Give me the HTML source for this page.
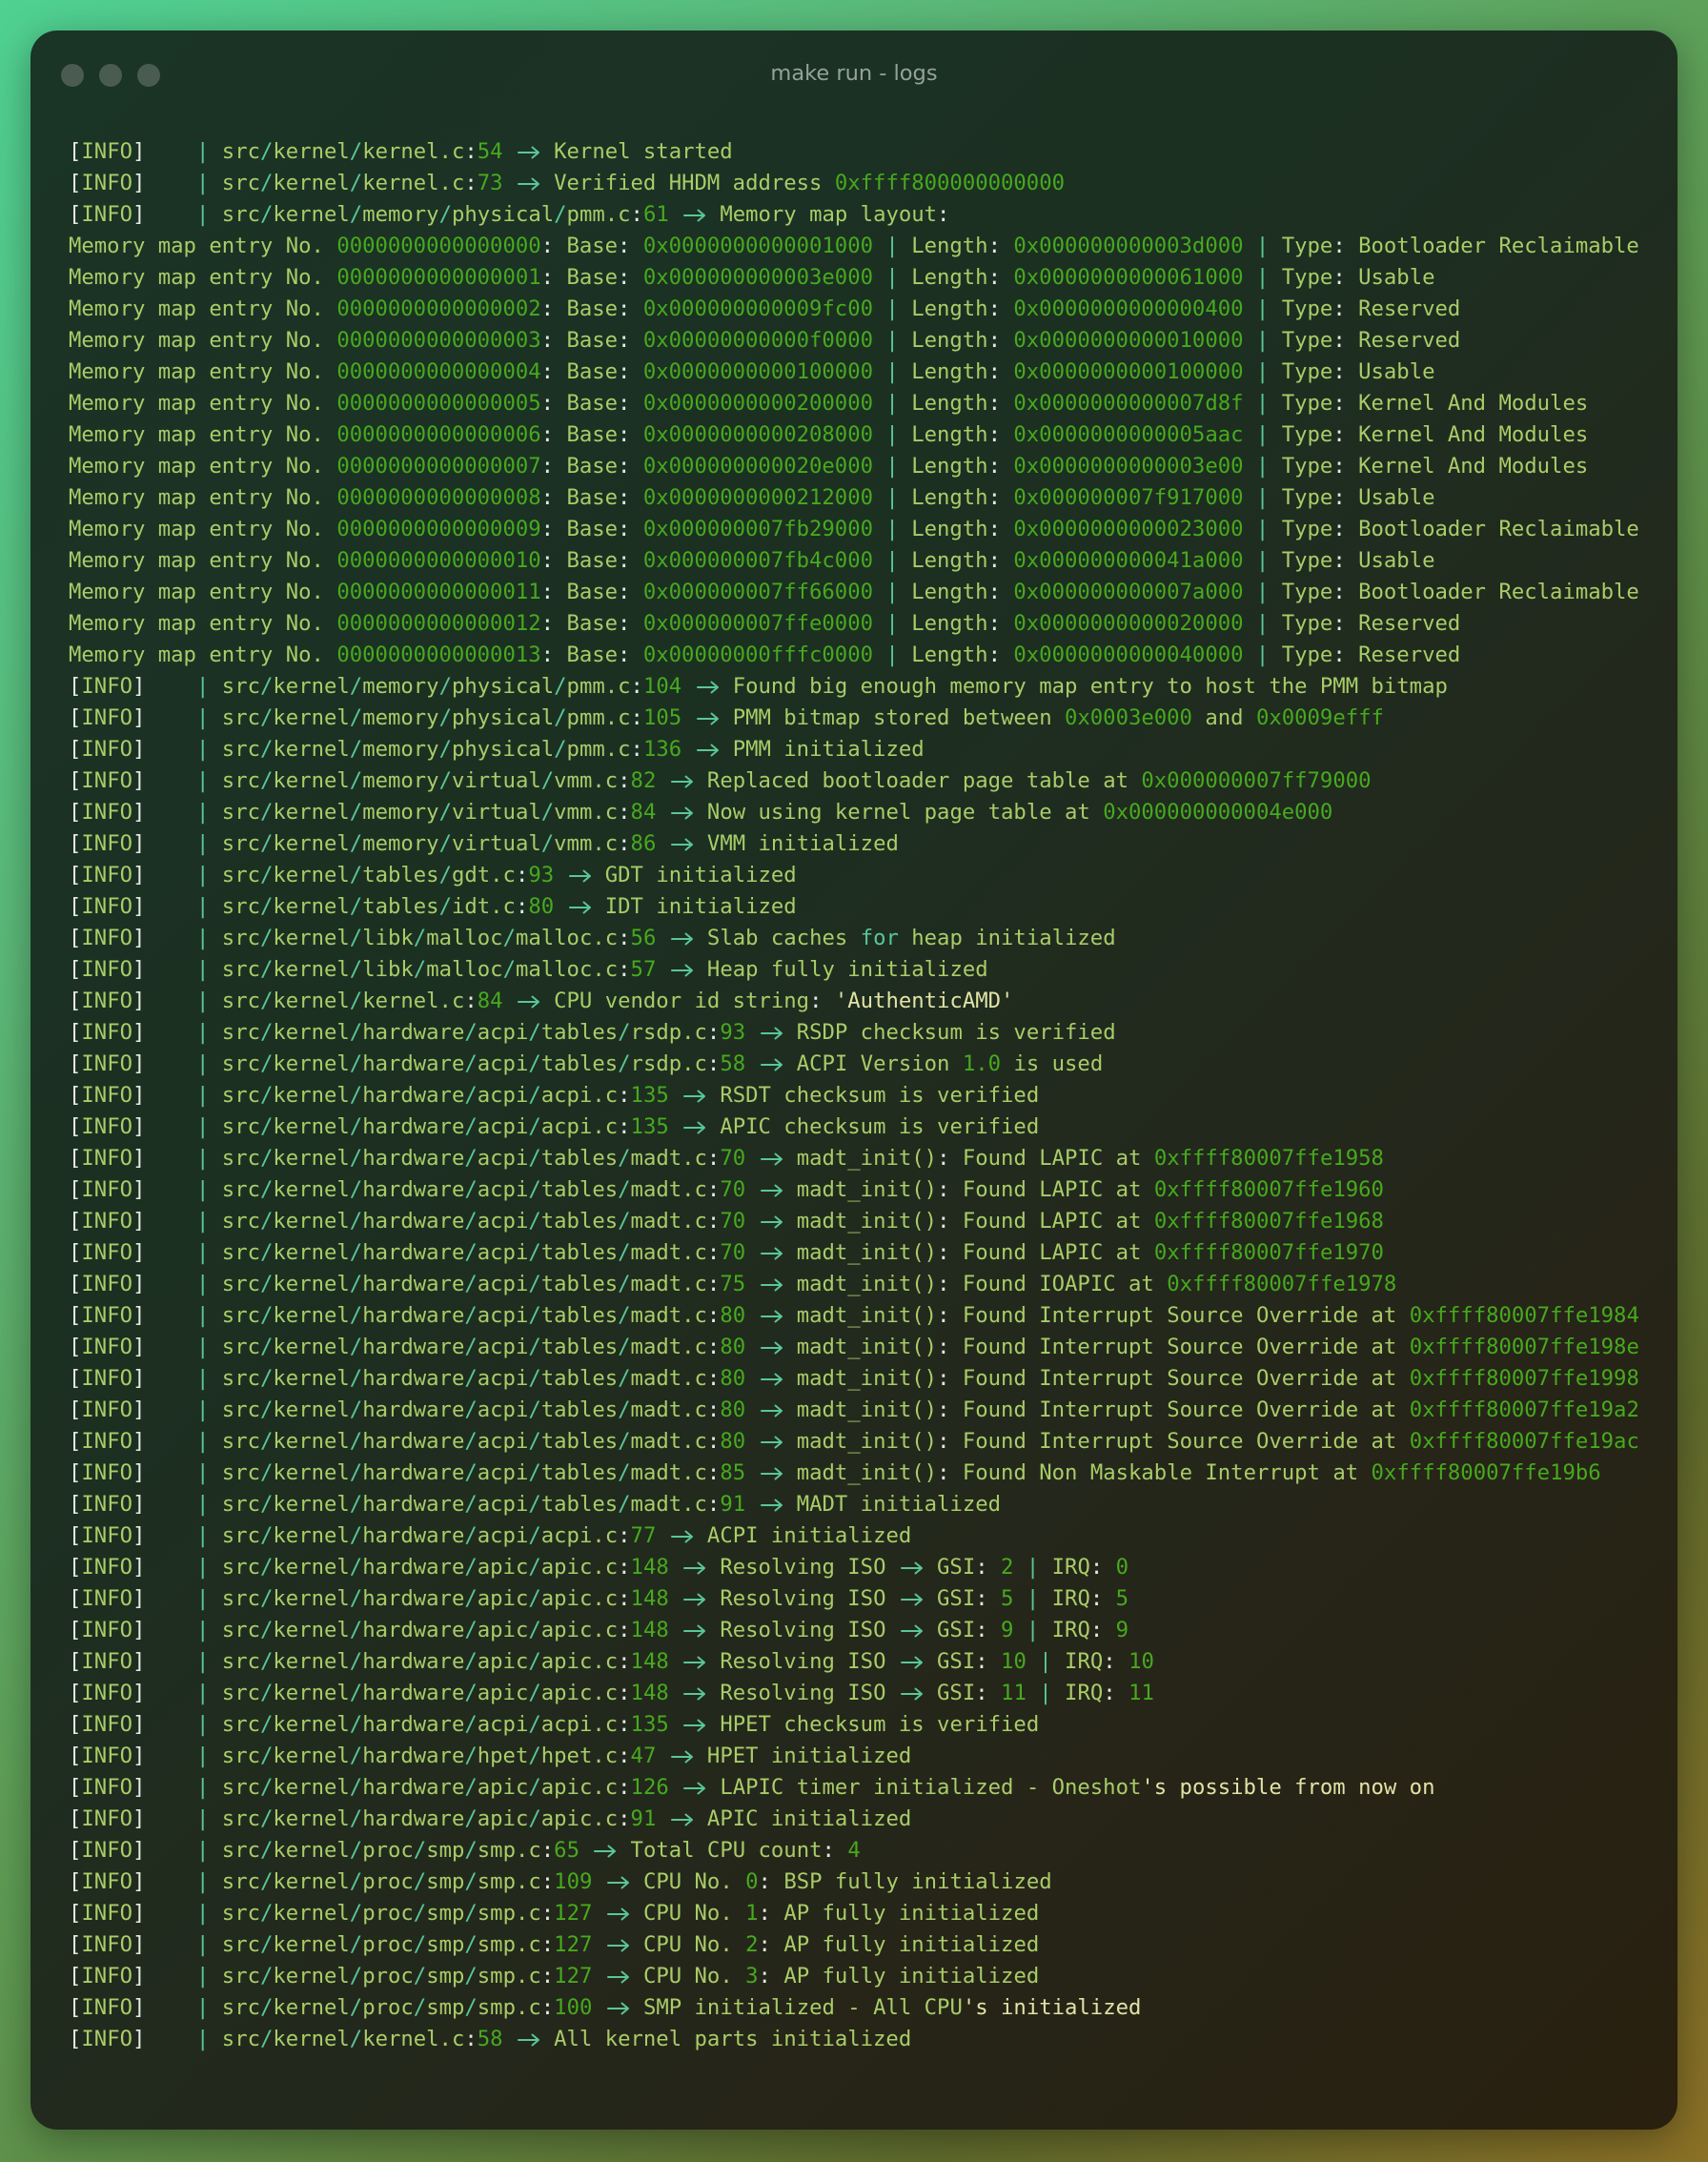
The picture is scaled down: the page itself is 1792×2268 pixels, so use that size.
<!DOCTYPE html>
<html><head><meta charset="utf-8"><style>
html,body{margin:0;padding:0;width:1792px;height:2268px;overflow:hidden}
body{background:linear-gradient(135deg,#4fd192 0%,#5bb878 25%,#5e9a52 50%,#5f6a2c 80%,#8b7026 100%);position:relative}
.win{position:absolute;left:32px;top:32px;width:1728px;height:2202px;border-radius:28px;background:linear-gradient(135deg,#1a3426 0%,#1c2f21 40%,#25261a 70%,#29200f 100%);box-shadow:0 10px 40px rgba(0,0,0,.35)}
.dot{position:absolute;top:67px;width:24px;height:24px;border-radius:50%;background:#4a5c51}
.title{position:absolute;top:64px;left:0;width:1792px;text-align:center;font:22.5px "DejaVu Sans","Liberation Sans",sans-serif;color:#95a396}
pre{position:absolute;left:72px;top:143px;margin:0;font:22.25px/33px "DejaVu Sans Mono","Liberation Mono",monospace;color:#a9cc68;white-space:pre}
w{color:#e6e9e2}n{color:#47a91e}t{color:#5ac795}y{color:#e2e3a6}
r{display:inline-block;width:2ch;height:33px;vertical-align:top;position:relative;color:transparent}
r svg{position:absolute;left:2px;top:10px}
</style></head><body>
<svg width="0" height="0" style="position:absolute"><defs><symbol id="ar" viewBox="0 0 24 14"><path d="M1 7H22M15.5 1.5L22 7L15.5 12.5" fill="none" stroke="#5ac795" stroke-width="2" stroke-linecap="round" stroke-linejoin="round"/></symbol></defs></svg>
<div class="win"></div>
<div class="dot" style="left:64px"></div><div class="dot" style="left:104px"></div><div class="dot" style="left:144px"></div>
<div class="title">make run - logs</div>
<pre><w>[</w>INFO<w>]</w>    <t>|</t> src<t>/</t>kernel<t>/</t>kernel.c<w>:</w><n>54</n> <r>-&gt;<svg width="24" height="14"><use href="#ar"/></svg></r> Kernel started
<w>[</w>INFO<w>]</w>    <t>|</t> src<t>/</t>kernel<t>/</t>kernel.c<w>:</w><n>73</n> <r>-&gt;<svg width="24" height="14"><use href="#ar"/></svg></r> Verified HHDM address <n>0xffff800000000000</n>
<w>[</w>INFO<w>]</w>    <t>|</t> src<t>/</t>kernel<t>/</t>memory<t>/</t>physical<t>/</t>pmm.c<w>:</w><n>61</n> <r>-&gt;<svg width="24" height="14"><use href="#ar"/></svg></r> Memory map layout<w>:</w>
Memory map entry No. <n>0000000000000000</n><w>:</w> Base<w>:</w> <n>0x0000000000001000</n> <t>|</t> Length<w>:</w> <n>0x000000000003d000</n> <t>|</t> Type<w>:</w> Bootloader Reclaimable
Memory map entry No. <n>0000000000000001</n><w>:</w> Base<w>:</w> <n>0x000000000003e000</n> <t>|</t> Length<w>:</w> <n>0x0000000000061000</n> <t>|</t> Type<w>:</w> Usable
Memory map entry No. <n>0000000000000002</n><w>:</w> Base<w>:</w> <n>0x000000000009fc00</n> <t>|</t> Length<w>:</w> <n>0x0000000000000400</n> <t>|</t> Type<w>:</w> Reserved
Memory map entry No. <n>0000000000000003</n><w>:</w> Base<w>:</w> <n>0x00000000000f0000</n> <t>|</t> Length<w>:</w> <n>0x0000000000010000</n> <t>|</t> Type<w>:</w> Reserved
Memory map entry No. <n>0000000000000004</n><w>:</w> Base<w>:</w> <n>0x0000000000100000</n> <t>|</t> Length<w>:</w> <n>0x0000000000100000</n> <t>|</t> Type<w>:</w> Usable
Memory map entry No. <n>0000000000000005</n><w>:</w> Base<w>:</w> <n>0x0000000000200000</n> <t>|</t> Length<w>:</w> <n>0x0000000000007d8f</n> <t>|</t> Type<w>:</w> Kernel And Modules
Memory map entry No. <n>0000000000000006</n><w>:</w> Base<w>:</w> <n>0x0000000000208000</n> <t>|</t> Length<w>:</w> <n>0x0000000000005aac</n> <t>|</t> Type<w>:</w> Kernel And Modules
Memory map entry No. <n>0000000000000007</n><w>:</w> Base<w>:</w> <n>0x000000000020e000</n> <t>|</t> Length<w>:</w> <n>0x0000000000003e00</n> <t>|</t> Type<w>:</w> Kernel And Modules
Memory map entry No. <n>0000000000000008</n><w>:</w> Base<w>:</w> <n>0x0000000000212000</n> <t>|</t> Length<w>:</w> <n>0x000000007f917000</n> <t>|</t> Type<w>:</w> Usable
Memory map entry No. <n>0000000000000009</n><w>:</w> Base<w>:</w> <n>0x000000007fb29000</n> <t>|</t> Length<w>:</w> <n>0x0000000000023000</n> <t>|</t> Type<w>:</w> Bootloader Reclaimable
Memory map entry No. <n>0000000000000010</n><w>:</w> Base<w>:</w> <n>0x000000007fb4c000</n> <t>|</t> Length<w>:</w> <n>0x000000000041a000</n> <t>|</t> Type<w>:</w> Usable
Memory map entry No. <n>0000000000000011</n><w>:</w> Base<w>:</w> <n>0x000000007ff66000</n> <t>|</t> Length<w>:</w> <n>0x000000000007a000</n> <t>|</t> Type<w>:</w> Bootloader Reclaimable
Memory map entry No. <n>0000000000000012</n><w>:</w> Base<w>:</w> <n>0x000000007ffe0000</n> <t>|</t> Length<w>:</w> <n>0x0000000000020000</n> <t>|</t> Type<w>:</w> Reserved
Memory map entry No. <n>0000000000000013</n><w>:</w> Base<w>:</w> <n>0x00000000fffc0000</n> <t>|</t> Length<w>:</w> <n>0x0000000000040000</n> <t>|</t> Type<w>:</w> Reserved
<w>[</w>INFO<w>]</w>    <t>|</t> src<t>/</t>kernel<t>/</t>memory<t>/</t>physical<t>/</t>pmm.c<w>:</w><n>104</n> <r>-&gt;<svg width="24" height="14"><use href="#ar"/></svg></r> Found big enough memory map entry to host the PMM bitmap
<w>[</w>INFO<w>]</w>    <t>|</t> src<t>/</t>kernel<t>/</t>memory<t>/</t>physical<t>/</t>pmm.c<w>:</w><n>105</n> <r>-&gt;<svg width="24" height="14"><use href="#ar"/></svg></r> PMM bitmap stored between <n>0x0003e000</n> and <n>0x0009efff</n>
<w>[</w>INFO<w>]</w>    <t>|</t> src<t>/</t>kernel<t>/</t>memory<t>/</t>physical<t>/</t>pmm.c<w>:</w><n>136</n> <r>-&gt;<svg width="24" height="14"><use href="#ar"/></svg></r> PMM initialized
<w>[</w>INFO<w>]</w>    <t>|</t> src<t>/</t>kernel<t>/</t>memory<t>/</t>virtual<t>/</t>vmm.c<w>:</w><n>82</n> <r>-&gt;<svg width="24" height="14"><use href="#ar"/></svg></r> Replaced bootloader page table at <n>0x000000007ff79000</n>
<w>[</w>INFO<w>]</w>    <t>|</t> src<t>/</t>kernel<t>/</t>memory<t>/</t>virtual<t>/</t>vmm.c<w>:</w><n>84</n> <r>-&gt;<svg width="24" height="14"><use href="#ar"/></svg></r> Now using kernel page table at <n>0x000000000004e000</n>
<w>[</w>INFO<w>]</w>    <t>|</t> src<t>/</t>kernel<t>/</t>memory<t>/</t>virtual<t>/</t>vmm.c<w>:</w><n>86</n> <r>-&gt;<svg width="24" height="14"><use href="#ar"/></svg></r> VMM initialized
<w>[</w>INFO<w>]</w>    <t>|</t> src<t>/</t>kernel<t>/</t>tables<t>/</t>gdt.c<w>:</w><n>93</n> <r>-&gt;<svg width="24" height="14"><use href="#ar"/></svg></r> GDT initialized
<w>[</w>INFO<w>]</w>    <t>|</t> src<t>/</t>kernel<t>/</t>tables<t>/</t>idt.c<w>:</w><n>80</n> <r>-&gt;<svg width="24" height="14"><use href="#ar"/></svg></r> IDT initialized
<w>[</w>INFO<w>]</w>    <t>|</t> src<t>/</t>kernel<t>/</t>libk<t>/</t>malloc<t>/</t>malloc.c<w>:</w><n>56</n> <r>-&gt;<svg width="24" height="14"><use href="#ar"/></svg></r> Slab caches <t>for</t> heap initialized
<w>[</w>INFO<w>]</w>    <t>|</t> src<t>/</t>kernel<t>/</t>libk<t>/</t>malloc<t>/</t>malloc.c<w>:</w><n>57</n> <r>-&gt;<svg width="24" height="14"><use href="#ar"/></svg></r> Heap fully initialized
<w>[</w>INFO<w>]</w>    <t>|</t> src<t>/</t>kernel<t>/</t>kernel.c<w>:</w><n>84</n> <r>-&gt;<svg width="24" height="14"><use href="#ar"/></svg></r> CPU vendor id string<w>:</w> <y>'AuthenticAMD'</y>
<w>[</w>INFO<w>]</w>    <t>|</t> src<t>/</t>kernel<t>/</t>hardware<t>/</t>acpi<t>/</t>tables<t>/</t>rsdp.c<w>:</w><n>93</n> <r>-&gt;<svg width="24" height="14"><use href="#ar"/></svg></r> RSDP checksum is verified
<w>[</w>INFO<w>]</w>    <t>|</t> src<t>/</t>kernel<t>/</t>hardware<t>/</t>acpi<t>/</t>tables<t>/</t>rsdp.c<w>:</w><n>58</n> <r>-&gt;<svg width="24" height="14"><use href="#ar"/></svg></r> ACPI Version <n>1.0</n> is used
<w>[</w>INFO<w>]</w>    <t>|</t> src<t>/</t>kernel<t>/</t>hardware<t>/</t>acpi<t>/</t>acpi.c<w>:</w><n>135</n> <r>-&gt;<svg width="24" height="14"><use href="#ar"/></svg></r> RSDT checksum is verified
<w>[</w>INFO<w>]</w>    <t>|</t> src<t>/</t>kernel<t>/</t>hardware<t>/</t>acpi<t>/</t>acpi.c<w>:</w><n>135</n> <r>-&gt;<svg width="24" height="14"><use href="#ar"/></svg></r> APIC checksum is verified
<w>[</w>INFO<w>]</w>    <t>|</t> src<t>/</t>kernel<t>/</t>hardware<t>/</t>acpi<t>/</t>tables<t>/</t>madt.c<w>:</w><n>70</n> <r>-&gt;<svg width="24" height="14"><use href="#ar"/></svg></r> madt_init()<w>:</w> Found LAPIC at <n>0xffff80007ffe1958</n>
<w>[</w>INFO<w>]</w>    <t>|</t> src<t>/</t>kernel<t>/</t>hardware<t>/</t>acpi<t>/</t>tables<t>/</t>madt.c<w>:</w><n>70</n> <r>-&gt;<svg width="24" height="14"><use href="#ar"/></svg></r> madt_init()<w>:</w> Found LAPIC at <n>0xffff80007ffe1960</n>
<w>[</w>INFO<w>]</w>    <t>|</t> src<t>/</t>kernel<t>/</t>hardware<t>/</t>acpi<t>/</t>tables<t>/</t>madt.c<w>:</w><n>70</n> <r>-&gt;<svg width="24" height="14"><use href="#ar"/></svg></r> madt_init()<w>:</w> Found LAPIC at <n>0xffff80007ffe1968</n>
<w>[</w>INFO<w>]</w>    <t>|</t> src<t>/</t>kernel<t>/</t>hardware<t>/</t>acpi<t>/</t>tables<t>/</t>madt.c<w>:</w><n>70</n> <r>-&gt;<svg width="24" height="14"><use href="#ar"/></svg></r> madt_init()<w>:</w> Found LAPIC at <n>0xffff80007ffe1970</n>
<w>[</w>INFO<w>]</w>    <t>|</t> src<t>/</t>kernel<t>/</t>hardware<t>/</t>acpi<t>/</t>tables<t>/</t>madt.c<w>:</w><n>75</n> <r>-&gt;<svg width="24" height="14"><use href="#ar"/></svg></r> madt_init()<w>:</w> Found IOAPIC at <n>0xffff80007ffe1978</n>
<w>[</w>INFO<w>]</w>    <t>|</t> src<t>/</t>kernel<t>/</t>hardware<t>/</t>acpi<t>/</t>tables<t>/</t>madt.c<w>:</w><n>80</n> <r>-&gt;<svg width="24" height="14"><use href="#ar"/></svg></r> madt_init()<w>:</w> Found Interrupt Source Override at <n>0xffff80007ffe1984</n>
<w>[</w>INFO<w>]</w>    <t>|</t> src<t>/</t>kernel<t>/</t>hardware<t>/</t>acpi<t>/</t>tables<t>/</t>madt.c<w>:</w><n>80</n> <r>-&gt;<svg width="24" height="14"><use href="#ar"/></svg></r> madt_init()<w>:</w> Found Interrupt Source Override at <n>0xffff80007ffe198e</n>
<w>[</w>INFO<w>]</w>    <t>|</t> src<t>/</t>kernel<t>/</t>hardware<t>/</t>acpi<t>/</t>tables<t>/</t>madt.c<w>:</w><n>80</n> <r>-&gt;<svg width="24" height="14"><use href="#ar"/></svg></r> madt_init()<w>:</w> Found Interrupt Source Override at <n>0xffff80007ffe1998</n>
<w>[</w>INFO<w>]</w>    <t>|</t> src<t>/</t>kernel<t>/</t>hardware<t>/</t>acpi<t>/</t>tables<t>/</t>madt.c<w>:</w><n>80</n> <r>-&gt;<svg width="24" height="14"><use href="#ar"/></svg></r> madt_init()<w>:</w> Found Interrupt Source Override at <n>0xffff80007ffe19a2</n>
<w>[</w>INFO<w>]</w>    <t>|</t> src<t>/</t>kernel<t>/</t>hardware<t>/</t>acpi<t>/</t>tables<t>/</t>madt.c<w>:</w><n>80</n> <r>-&gt;<svg width="24" height="14"><use href="#ar"/></svg></r> madt_init()<w>:</w> Found Interrupt Source Override at <n>0xffff80007ffe19ac</n>
<w>[</w>INFO<w>]</w>    <t>|</t> src<t>/</t>kernel<t>/</t>hardware<t>/</t>acpi<t>/</t>tables<t>/</t>madt.c<w>:</w><n>85</n> <r>-&gt;<svg width="24" height="14"><use href="#ar"/></svg></r> madt_init()<w>:</w> Found Non Maskable Interrupt at <n>0xffff80007ffe19b6</n>
<w>[</w>INFO<w>]</w>    <t>|</t> src<t>/</t>kernel<t>/</t>hardware<t>/</t>acpi<t>/</t>tables<t>/</t>madt.c<w>:</w><n>91</n> <r>-&gt;<svg width="24" height="14"><use href="#ar"/></svg></r> MADT initialized
<w>[</w>INFO<w>]</w>    <t>|</t> src<t>/</t>kernel<t>/</t>hardware<t>/</t>acpi<t>/</t>acpi.c<w>:</w><n>77</n> <r>-&gt;<svg width="24" height="14"><use href="#ar"/></svg></r> ACPI initialized
<w>[</w>INFO<w>]</w>    <t>|</t> src<t>/</t>kernel<t>/</t>hardware<t>/</t>apic<t>/</t>apic.c<w>:</w><n>148</n> <r>-&gt;<svg width="24" height="14"><use href="#ar"/></svg></r> Resolving ISO <r>-&gt;<svg width="24" height="14"><use href="#ar"/></svg></r> GSI<w>:</w> <n>2</n> <t>|</t> IRQ<w>:</w> <n>0</n>
<w>[</w>INFO<w>]</w>    <t>|</t> src<t>/</t>kernel<t>/</t>hardware<t>/</t>apic<t>/</t>apic.c<w>:</w><n>148</n> <r>-&gt;<svg width="24" height="14"><use href="#ar"/></svg></r> Resolving ISO <r>-&gt;<svg width="24" height="14"><use href="#ar"/></svg></r> GSI<w>:</w> <n>5</n> <t>|</t> IRQ<w>:</w> <n>5</n>
<w>[</w>INFO<w>]</w>    <t>|</t> src<t>/</t>kernel<t>/</t>hardware<t>/</t>apic<t>/</t>apic.c<w>:</w><n>148</n> <r>-&gt;<svg width="24" height="14"><use href="#ar"/></svg></r> Resolving ISO <r>-&gt;<svg width="24" height="14"><use href="#ar"/></svg></r> GSI<w>:</w> <n>9</n> <t>|</t> IRQ<w>:</w> <n>9</n>
<w>[</w>INFO<w>]</w>    <t>|</t> src<t>/</t>kernel<t>/</t>hardware<t>/</t>apic<t>/</t>apic.c<w>:</w><n>148</n> <r>-&gt;<svg width="24" height="14"><use href="#ar"/></svg></r> Resolving ISO <r>-&gt;<svg width="24" height="14"><use href="#ar"/></svg></r> GSI<w>:</w> <n>10</n> <t>|</t> IRQ<w>:</w> <n>10</n>
<w>[</w>INFO<w>]</w>    <t>|</t> src<t>/</t>kernel<t>/</t>hardware<t>/</t>apic<t>/</t>apic.c<w>:</w><n>148</n> <r>-&gt;<svg width="24" height="14"><use href="#ar"/></svg></r> Resolving ISO <r>-&gt;<svg width="24" height="14"><use href="#ar"/></svg></r> GSI<w>:</w> <n>11</n> <t>|</t> IRQ<w>:</w> <n>11</n>
<w>[</w>INFO<w>]</w>    <t>|</t> src<t>/</t>kernel<t>/</t>hardware<t>/</t>acpi<t>/</t>acpi.c<w>:</w><n>135</n> <r>-&gt;<svg width="24" height="14"><use href="#ar"/></svg></r> HPET checksum is verified
<w>[</w>INFO<w>]</w>    <t>|</t> src<t>/</t>kernel<t>/</t>hardware<t>/</t>hpet<t>/</t>hpet.c<w>:</w><n>47</n> <r>-&gt;<svg width="24" height="14"><use href="#ar"/></svg></r> HPET initialized
<w>[</w>INFO<w>]</w>    <t>|</t> src<t>/</t>kernel<t>/</t>hardware<t>/</t>apic<t>/</t>apic.c<w>:</w><n>126</n> <r>-&gt;<svg width="24" height="14"><use href="#ar"/></svg></r> LAPIC timer initialized - Oneshot<y>'s possible from now on</y>
<w>[</w>INFO<w>]</w>    <t>|</t> src<t>/</t>kernel<t>/</t>hardware<t>/</t>apic<t>/</t>apic.c<w>:</w><n>91</n> <r>-&gt;<svg width="24" height="14"><use href="#ar"/></svg></r> APIC initialized
<w>[</w>INFO<w>]</w>    <t>|</t> src<t>/</t>kernel<t>/</t>proc<t>/</t>smp<t>/</t>smp.c<w>:</w><n>65</n> <r>-&gt;<svg width="24" height="14"><use href="#ar"/></svg></r> Total CPU count<w>:</w> <n>4</n>
<w>[</w>INFO<w>]</w>    <t>|</t> src<t>/</t>kernel<t>/</t>proc<t>/</t>smp<t>/</t>smp.c<w>:</w><n>109</n> <r>-&gt;<svg width="24" height="14"><use href="#ar"/></svg></r> CPU No. <n>0</n><w>:</w> BSP fully initialized
<w>[</w>INFO<w>]</w>    <t>|</t> src<t>/</t>kernel<t>/</t>proc<t>/</t>smp<t>/</t>smp.c<w>:</w><n>127</n> <r>-&gt;<svg width="24" height="14"><use href="#ar"/></svg></r> CPU No. <n>1</n><w>:</w> AP fully initialized
<w>[</w>INFO<w>]</w>    <t>|</t> src<t>/</t>kernel<t>/</t>proc<t>/</t>smp<t>/</t>smp.c<w>:</w><n>127</n> <r>-&gt;<svg width="24" height="14"><use href="#ar"/></svg></r> CPU No. <n>2</n><w>:</w> AP fully initialized
<w>[</w>INFO<w>]</w>    <t>|</t> src<t>/</t>kernel<t>/</t>proc<t>/</t>smp<t>/</t>smp.c<w>:</w><n>127</n> <r>-&gt;<svg width="24" height="14"><use href="#ar"/></svg></r> CPU No. <n>3</n><w>:</w> AP fully initialized
<w>[</w>INFO<w>]</w>    <t>|</t> src<t>/</t>kernel<t>/</t>proc<t>/</t>smp<t>/</t>smp.c<w>:</w><n>100</n> <r>-&gt;<svg width="24" height="14"><use href="#ar"/></svg></r> SMP initialized - All CPU<y>'s initialized</y>
<w>[</w>INFO<w>]</w>    <t>|</t> src<t>/</t>kernel<t>/</t>kernel.c<w>:</w><n>58</n> <r>-&gt;<svg width="24" height="14"><use href="#ar"/></svg></r> All kernel parts initialized</pre>
</body></html>
